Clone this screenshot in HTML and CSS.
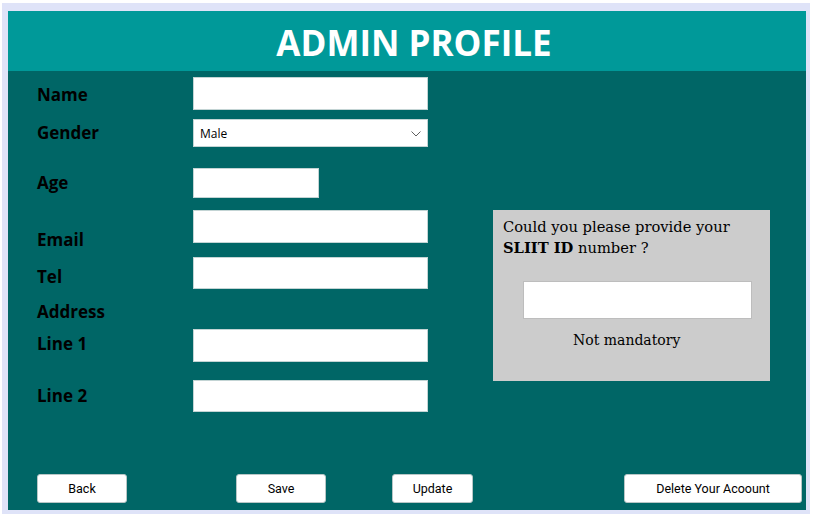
FILE: index.html
```html
<!DOCTYPE html>
<html lang="en">
<head>
<meta charset="utf-8">
<title>Admin Profile</title>
<link rel="stylesheet" href="styles.css">
</head>
<body>
<div class="frame">
  <header class="header">
    <h1 class="title">ADMIN PROFILE</h1>
  </header>
  <main class="main">
    <div class="content">
      <form class="form">
        <div class="row row--name">
          <label class="label">Name</label>
          <input class="field" type="text">
        </div>
        <div class="row row--gender">
          <label class="label">Gender</label>
          <div class="select-wrap">
            <select class="select"><option>Male</option><option>Female</option></select>
            <svg class="chevron" width="10" height="6" viewBox="0 0 10 6"><path d="M0.5 0.5 L5 5 L9.5 0.5" fill="none" stroke="#606060" stroke-width="1"/></svg>
          </div>
        </div>
        <div class="row row--age">
          <label class="label">Age</label>
          <input class="field field--short" type="text">
        </div>
        <div class="row row--email">
          <label class="label label--end label--drop">Email</label>
          <input class="field" type="text">
        </div>
        <div class="row row--tel">
          <label class="label label--end">Tel</label>
          <input class="field" type="text">
        </div>
        <div class="row row--address">
          <span class="label">Address</span>
        </div>
        <div class="row row--line1">
          <label class="label">Line 1</label>
          <input class="field" type="text">
        </div>
        <div class="row row--line2">
          <label class="label">Line 2</label>
          <input class="field" type="text">
        </div>
      </form>
      <aside class="card">
        <p class="card-text">Could you please provide your<br><strong>SLIIT ID</strong> number ?</p>
        <input class="card-field" type="text">
        <p class="card-note">Not mandatory</p>
      </aside>
    </div>
    <div class="actions">
      <button class="btn btn--back" type="button">Back</button>
      <button class="btn btn--save" type="button">Save</button>
      <button class="btn btn--update" type="button">Update</button>
      <button class="btn btn--delete" type="button">Delete Your Acoount</button>
    </div>
  </main>
</div>
</body>
</html>
```
FILE: styles.css
```css
html, body {
  margin: 0;
  padding: 0;
  background: #ffffff;
}

.frame {
  margin: 3px 5px 6px 2px;
  border-style: solid;
  border-color: #dfe3f8;
  border-width: 8px 4px 4px 6px;
  width: 798px;
  height: 499px;
  display: flex;
  flex-direction: column;
}

.header {
  height: 60px;
  flex: none;
  box-sizing: border-box;
  padding: 3px 0 0 14px;
  background: #009999;
  display: flex;
  align-items: center;
  justify-content: center;
}

.title {
  margin: 0;
  font-family: "Open Sans", "Noto Sans", sans-serif;
  font-weight: 700;
  font-size: 35px;
  line-height: 40px;
  color: #ffffff;
}

.main {
  flex: 1;
  background: #006666;
  display: flex;
  flex-direction: column;
}

.content {
  flex: 1;
  display: flex;
  align-items: flex-start;
}

.form {
  width: 420px;
  box-sizing: border-box;
  padding-left: 29px;
  margin: 0;
  display: flex;
  flex-direction: column;
}

.row {
  display: flex;
  align-items: center;
}

.row--name { margin-top: 6px; height: 33px; }
.row--gender { margin-top: 9px; height: 28px; }
.row--age { margin-top: 21px; height: 30px; }
.row--email { margin-top: 12px; height: 33px; }
.row--tel { margin-top: 14px; height: 32px; }
.row--address { margin-top: 11px; height: 24px; }
.row--line1 { margin-top: 5px; height: 33px; }
.row--line2 { margin-top: 18px; height: 32px; }

.label {
  width: 156px;
  flex: none;
  font-family: "Open Sans", "Noto Sans", sans-serif;
  font-weight: 700;
  font-size: 17px;
  line-height: 24px;
  color: #000000;
}

.row--name .label { margin-top: 3px; }
.row--line1 .label { margin-top: -3px; }

.label--end { align-self: flex-end; }
.label--drop { margin-bottom: -9px; }

.field {
  width: 235px;
  height: 100%;
  box-sizing: border-box;
  margin: 0;
  border: 1px solid #c3d4d4;
  background: #ffffff;
  padding: 0 6px;
  font-family: "Open Sans", sans-serif;
  font-size: 12px;
  outline: none;
}

.field--short { width: 126px; }

.select-wrap {
  position: relative;
  width: 235px;
  height: 100%;
}

.select {
  width: 100%;
  height: 100%;
  box-sizing: border-box;
  margin: 0;
  -webkit-appearance: none;
  appearance: none;
  border: 1px solid #c3d4d4;
  border-radius: 0;
  background: #ffffff;
  padding: 0 0 0 6px;
  font-family: "Open Sans", "Noto Sans", sans-serif;
  font-size: 12px;
  color: #000000;
  outline: none;
}

.chevron {
  position: absolute;
  right: 7px;
  top: 12px;
  pointer-events: none;
}

.card {
  width: 277px;
  height: 171px;
  margin-top: 139px;
  margin-left: 65px;
  box-sizing: border-box;
  background: #cccccc;
  padding: 6px 0 0 10px;
  display: flex;
  flex-direction: column;
  align-items: flex-start;
  font-family: "DejaVu Serif", "Liberation Serif", serif;
  font-size: 14.7px;
  line-height: 21px;
  color: #000000;
}

.card-text {
  margin: 0;
}

.card-text strong {
  font-weight: 700;
}

.card-field {
  margin: 23px 0 0 20px;
  width: 229px;
  height: 38px;
  box-sizing: border-box;
  border: 1px solid #bdbdbd;
  background: #ffffff;
  outline: none;
}

.card-note {
  margin: 11px 0 0 70px;
  font-size: 14px;
}

.actions {
  flex: none;
  display: flex;
  align-items: center;
  padding: 0 4px 7px 29px;
}

.btn {
  height: 29px;
  box-sizing: border-box;
  margin: 0;
  padding: 0;
  background: #ffffff;
  border: 1px solid #b8c6c6;
  border-radius: 3px;
  font-family: "Liberation Sans Narrow", "Roboto", sans-serif;
  font-size: 12.5px;
  color: #000000;
  cursor: pointer;
}

.btn--back { width: 90px; }
.btn--save { width: 90px; margin-left: 109px; }
.btn--update { width: 81px; margin-left: 66px; }
.btn--delete { width: 178px; margin-left: auto; }
```
